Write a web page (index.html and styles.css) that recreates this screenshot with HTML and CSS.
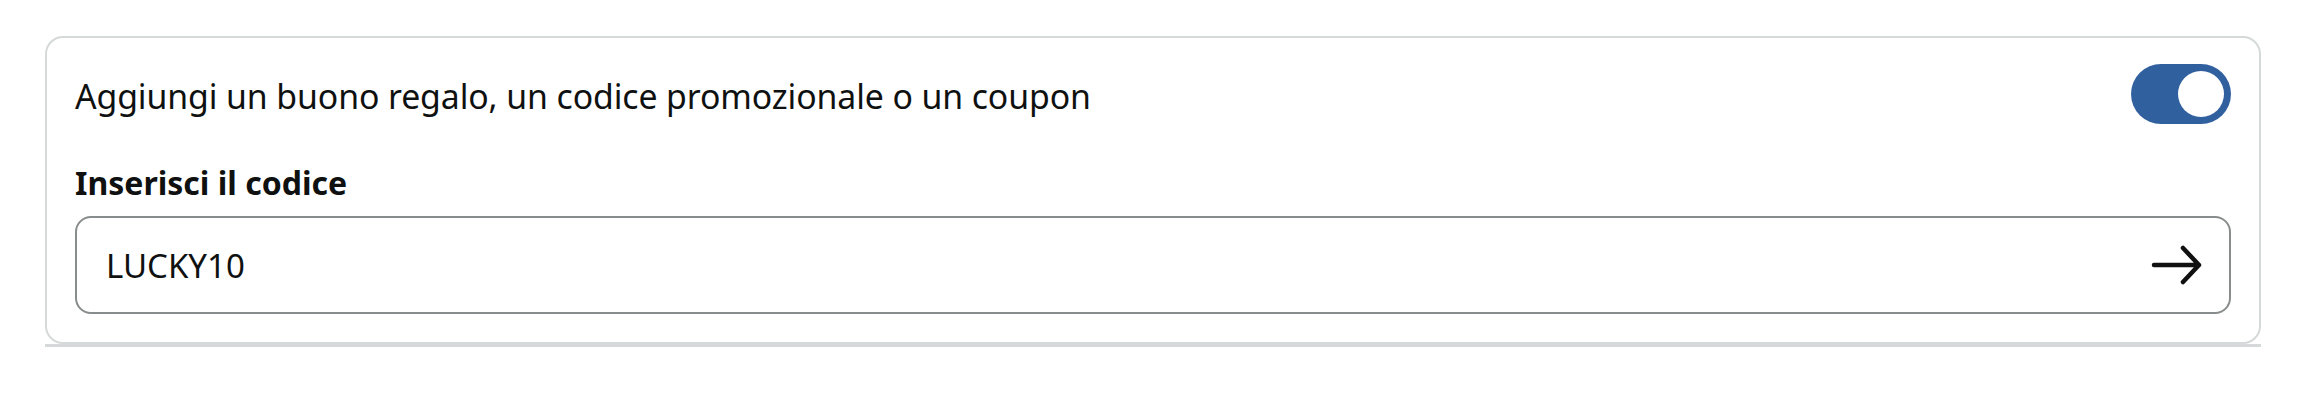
FILE: index.html
```html
<!DOCTYPE html>
<html lang="it">
<head>
  <meta charset="UTF-8" />
  <meta name="viewport" content="width=device-width, initial-scale=1.0" />
  <title>Buono regalo</title>
  <link rel="stylesheet" href="styles.css">
</head>
<body>
  <div class="sezione">
    <div class="card">
      <div class="riga">
        <span class="titolo">Aggiungi un buono regalo, un codice promozionale o un coupon</span>
        <span class="toggle"><span class="pallino"></span></span>
      </div>

      <div class="etichetta">Inserisci il codice</div>

      <div class="campo">
        <span class="valore">LUCKY10</span>
        <svg class="freccia" width="52" height="42" viewBox="0 0 52 42">
          <path d="M3 21 H48 M32 4 L48 21 L32 38" fill="none" stroke="#111" stroke-width="4.5" stroke-linecap="round" stroke-linejoin="round" />
        </svg>
      </div>
    </div>
  </div>
</body>
</html>
```

FILE: styles.css
```css
body {
  font-family: "Noto Sans", Arial, sans-serif;
  background-color: #fff;
  color: #0f1111;
  margin: 0;
  padding: 0;
}

.sezione {
  margin: 36px 0 0 45px;
  width: 2216px;
  border-bottom: 3px solid #d5d9d9;
}

.card {
  border: 2px solid #d5d9d9;
  border-radius: 18px;
  padding: 26px 28px 28px 28px;
}

.riga {
  display: flex;
  align-items: center;
  justify-content: space-between;
  height: 60px;
}

.titolo {
  font-size: 33.8px;
  letter-spacing: -0.1px;
  padding-top: 4px;
}

.toggle {
  width: 100px;
  height: 60px;
  border-radius: 30px;
  background-color: #31609f;
  display: flex;
  align-items: center;
  justify-content: flex-end;
  padding-right: 7px;
  box-sizing: border-box;
}

.pallino {
  width: 46px;
  height: 46px;
  border-radius: 50%;
  background-color: #fff;
}

.etichetta {
  font-size: 32px;
  font-weight: bold;
  margin-top: 38px;
  line-height: 42px;
}

.campo {
  margin-top: 12px;
  height: 98px;
  border: 2px solid #888c8c;
  border-radius: 16px;
  box-sizing: border-box;
  display: flex;
  align-items: center;
  justify-content: space-between;
  padding: 0 26px 0 29px;
}

.valore {
  font-size: 33px;
}
```
